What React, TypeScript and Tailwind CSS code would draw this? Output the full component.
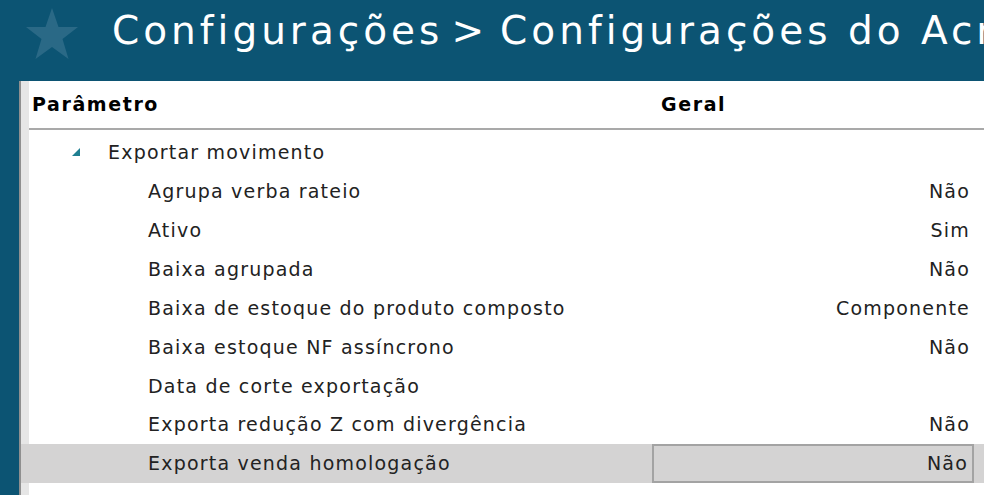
const FONT = { fontFamily: '"DejaVu Sans", Verdana, sans-serif' };

type Row = { label: string; value?: string; selected?: boolean };

const ROWS: Row[] = [
  { label: 'Agrupa verba rateio', value: 'Não' },
  { label: 'Ativo', value: 'Sim' },
  { label: 'Baixa agrupada', value: 'Não' },
  { label: 'Baixa de estoque do produto composto', value: 'Componente' },
  { label: 'Baixa estoque NF assíncrono', value: 'Não' },
  { label: 'Data de corte exportação' },
  { label: 'Exporta redução Z com divergência', value: 'Não' },
  { label: 'Exporta venda homologação', value: 'Não', selected: true },
];

function Star() {
  return (
    <svg width="58" height="56" viewBox="0 0 58 56" className="shrink-0">
      <polygon
        points="29,2 35.5,21 55,21 39.5,33 45.5,53 29,41 12.5,53 18.5,33 3,21 22.5,21"
        fill="#2a6986"
      />
    </svg>
  );
}

export default function App() {
  return (
    <div className="h-[495px] w-[984px] overflow-hidden bg-[#0c5473] flex flex-col" style={FONT}>
      {/* title bar */}
      <div className="h-[81px] shrink-0 flex items-start pl-[23px] pt-[6px] overflow-hidden">
        <Star />
        <h1 className="ml-[31px] -mt-[1px] whitespace-nowrap text-[39px] leading-[52px] tracking-[4px] text-white">
          Configurações<span className="ml-[8px] mr-[12px]">&gt;</span>Configurações do Acréscimo
        </h1>
      </div>

      {/* grid panel */}
      <div className="ml-[19px] flex-1 flex bg-white">
        <div className="w-[2px] bg-[#8f8f8f]" />
        <div className="w-[8px] bg-[#e6e6e6]" />
        <div className="flex-1 flex flex-col min-w-0 text-[19px] tracking-[1.2px]">
          <div className="h-[49px] shrink-0 flex items-center font-bold text-black border-b-2 border-[#a9a9a9] tracking-[1.6px]">
            <div className="w-[632px] pl-[3px]">Parâmetro</div>
            <div>Geral</div>
          </div>
          <div className="pt-[3px]">
            <div className="h-[38.9px] flex items-center text-[#222]">
              <svg width="11" height="11" viewBox="0 0 11 11" className="ml-[41px] mr-[27px]">
                <polygon points="10,1 10,9 2,9" fill="#1f7f91" />
              </svg>
              Exportar movimento
            </div>
            {ROWS.map(r => (
              <div
                key={r.label}
                className={`h-[38.9px] flex items-center text-[#222] -ml-[8px] ${r.selected ? 'bg-[#d4d3d3]' : ''}`}
              >
                <div className="w-[631px] shrink-0 pl-[127px] whitespace-nowrap">{r.label}</div>
                <div
                  className={`w-[322px] h-full flex items-center justify-end pr-[4px] ${r.selected ? 'border-2 border-[#a3a3a3] h-[36px]' : ''}`}
                >
                  {r.value}
                </div>
              </div>
            ))}
          </div>
        </div>
      </div>
    </div>
  );
}
